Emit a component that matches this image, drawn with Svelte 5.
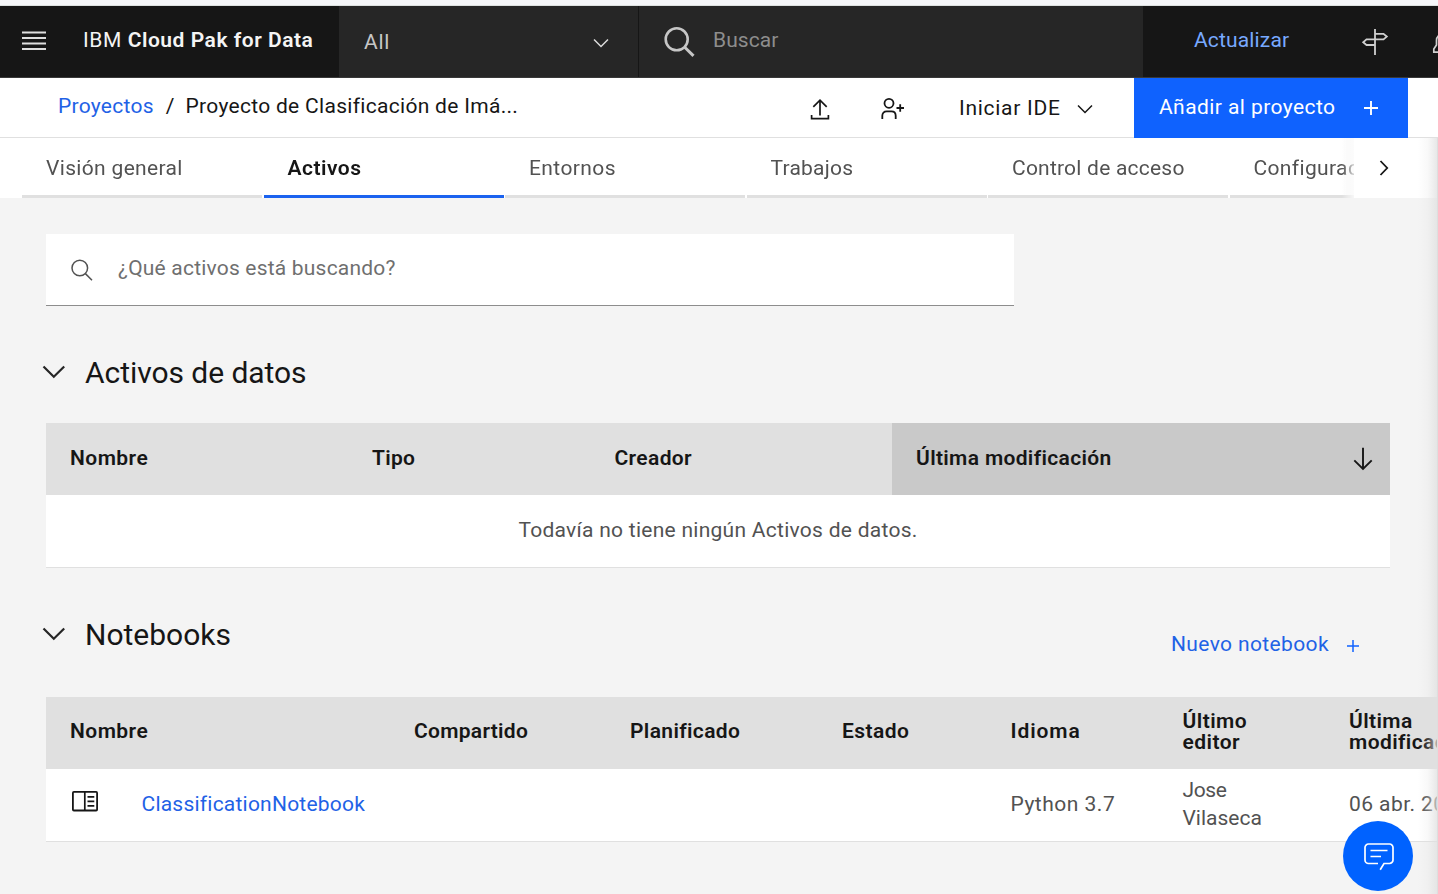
<script>
  const tabs = [
    { label: 'Visión general', ls: 0.33 },
    { label: 'Activos', ls: 0.5, active: true },
    { label: 'Entornos', ls: 0.4 },
    { label: 'Trabajos', ls: 0.22 },
    { label: 'Control de acceso', ls: 0.22 },
    { label: 'Configuración', ls: 0.36 }
  ];
  const dataColumns = [
    { label: 'Nombre', ls: 0.45 },
    { label: 'Tipo', ls: 0.3 },
    { label: 'Creador', ls: 0.37 },
    { label: 'Última modificación', ls: 0.34, sorted: true }
  ];
  const notebookColumns = [
    { label: 'Nombre', ls: 0.45 },
    { label: 'Compartido', ls: 0.29 },
    { label: 'Planificado', ls: 0.36 },
    { label: 'Estado', ls: 0.45 },
    { label: 'Idioma', ls: 0.9 },
    { label: 'Último editor', ls: 0.45 },
    { label: 'Última modificación', ls: 0.4 }
  ];
</script>

<div class="app">
  <div class="strip"></div>
  <header class="shell">
    <svg class="menu" width="24" height="20" viewBox="0 0 24 20"><path d="M0 1.500h24M0 7h24M0 12.500h24M0 18h24" stroke="#dedede" stroke-width="1.8" /></svg>
    <div class="brand"><span class="ibm">IBM</span> <b>Cloud Pak for Data</b></div>
    <div class="scope">
      <span>All</span>
      <svg width="24" height="24" viewBox="0 0 16 16"><path d="M8 11L3 6l.7-.7L8 9.6l4.3-4.3.7.7z" fill="#dcdcdc" /></svg>
    </div>
    <div class="global-search">
      <svg width="32" height="32" viewBox="0 0 32 32"><circle cx="12.700" cy="13.3" r="11" fill="none" stroke="#c6c6c6" stroke-width="2.6" /><path d="M20.700 21.3l8.800 8.600" stroke="#c6c6c6" stroke-width="3" /></svg>
      <span>Buscar</span>
    </div>
    <a class="upgrade" href="#upgrade">Actualizar</a>
    <svg class="post" width="28" height="28" viewBox="0 0 28 28" fill="none" stroke="#d0d0d0" stroke-width="1.8"><path d="M14 1v26M14 5.800h8.500l3.300 2.800-3.300 2.800H5.500L2.200 14.200l3.300 2.800H14" /></svg>
    <svg class="bell" width="24" height="24" viewBox="0 0 24 24" fill="none" stroke="#d0d0d0" stroke-width="1.700"><path d="M12 2.500c-4.500 0-7.500 3-7.500 7V14l-2.700 4v3.200h20.400V18l-2.700-4V9.500c0-4-3-7-7.500-7z" /></svg>
  </header>

  <div class="toolbar">
    <nav class="crumbs"><a href="#projects">Proyectos</a><i>/</i><span>Proyecto de Clasificación de Imá...</span></nav>
    <svg class="upload" width="24" height="24" viewBox="0 0 24 24" fill="none" stroke="#161616" stroke-width="1.7"><path d="M12 3.200V18.500M5.300 9.800L12 3.200l6.700 6.600M3.600 18v3.600h16.800V18" /></svg>
    <svg class="person" width="24" height="24" viewBox="0 0 24 24" fill="none" stroke="#161616" stroke-width="1.8"><circle cx="9" cy="6.300" r="4.500" /><path d="M2.300 22v-3.300c0-2.600 1.700-4.300 4.300-4.300h4.800c2.600 0 4.300 1.700 4.300 4.300V22M16.500 11h7.500M20.200 7.200v7.600" /></svg>
    <div class="ide"><span>Iniciar IDE</span><svg width="24" height="24" viewBox="0 0 16 16"><path d="M8 11L3 6l.7-.7L8 9.600l4.300-4.300.7.7z" fill="#161616" /></svg></div>
    <button class="add"><span>Añadir al proyecto</span><svg width="14" height="14" viewBox="0 0 14 14"><path d="M7 0v14M0 7h14" stroke="#fff" stroke-width="1.900" /></svg></button>
  </div>

  <div class="tabbar">
    <div class="tabs">
      {#each tabs as tab}
        <div class="tab" class:active={tab.active} style:letter-spacing="{tab.ls}px">{tab.label}</div>
      {/each}
    </div>
    <div class="next"><svg width="10" height="16" viewBox="0 0 10 16"><path d="M1.500 1l6.700 7-6.700 7" fill="none" stroke="#161616" stroke-width="1.800" /></svg></div>
  </div>

  <main>
    <div class="asset-search">
      <svg width="24" height="24" viewBox="0 0 24 24" fill="none" stroke="#525252" stroke-width="1.500"><circle cx="9.800" cy="10" r="7.800" /><path d="M15.400 15.600l6.600 6.600" /></svg>
      <span>¿Qué activos está buscando?</span>
    </div>

    <section class="data">
      <h2><svg width="24" height="14" viewBox="0 0 24 14"><path d="M1.500 1.500L11.800 11.800 22.200 1.500" fill="none" stroke="#262626" stroke-width="2.200" /></svg><span>Activos de datos</span></h2>
      <div class="head data-grid">
        {#each dataColumns as col}
          <div class="cell" class:sorted={col.sorted} style:letter-spacing="{col.ls}px">
            <span>{col.label}</span>
            {#if col.sorted}
              <svg width="20" height="24" viewBox="0 0 20 24"><path d="M10 .800v21M1.300 13.300L10 22l8.700-8.700" fill="none" stroke="#161616" stroke-width="1.900" /></svg>
            {/if}
          </div>
        {/each}
      </div>
      <div class="empty">Todavía no tiene ningún Activos de datos.</div>
    </section>

    <section class="notebooks">
      <div class="title-row">
        <h2><svg width="24" height="14" viewBox="0 0 24 14"><path d="M1.500 1.500L11.800 11.800 22.200 1.500" fill="none" stroke="#262626" stroke-width="2.200" /></svg><span>Notebooks</span></h2>
        <a class="new" href="#new"><span>Nuevo notebook</span><svg width="12" height="12" viewBox="0 0 12 12"><path d="M6 0v12M0 6h12" stroke="#0f62fe" stroke-width="1.500" /></svg></a>
      </div>
      <div class="head nb-grid">
        {#each notebookColumns as col}
          <div class="cell" style:letter-spacing="{col.ls}px">{col.label}</div>
        {/each}
      </div>
      <div class="row nb-grid">
        <div class="cell file">
          <svg width="26" height="21" viewBox="0 0 26 21" fill="none" stroke="#161616"><rect x=".9" y=".9" width="24.200" height="18.600" rx="1" stroke-width="1.800" /><path d="M12.800 1v18.500M15.500 5.800h6.800M15.500 10.300h6.800M15.500 14.800h6.800" stroke-width="1.700" /></svg>
          <a href="#notebook">ClassificationNotebook</a>
        </div>
        <div class="cell"></div>
        <div class="cell"></div>
        <div class="cell"></div>
        <div class="cell lang">Python 3.7</div>
        <div class="cell"><span class="jose">Jose</span> Vilaseca</div>
        <div class="cell date">06 abr. 2021</div>
      </div>
    </section>
  </main>

  <div class="edge"></div>
  <button class="chat" aria-label="Chat">
    <svg width="30" height="28" viewBox="0 0 30 28" fill="none" stroke="#fff" stroke-width="1.700"><path d="M14 20.500H4.500A3.500 3.500 0 0 1 1 17V4.500A3.500 3.500 0 0 1 4.500 1h21A3.500 3.500 0 0 1 29 4.500V17a3.500 3.500 0 0 1-3.500 3.500H20l-3.800 6.200M6.500 7.500h17M6.500 13.500h10.500" /></svg>
  </button>
</div>

<style>
  :global(body) { background: #f4f4f4; overflow: hidden; }
  .app {
    position: relative;
    box-sizing: border-box;
    width: 1438px;
    height: 894px;
    overflow: hidden;
    font: 400 21px/28px Roboto, sans-serif;
    color: #161616;
    background: #f4f4f4;
  }
  svg { display: block; flex: none; }
  a { text-decoration: none; color: #1f62e6; }
  b { font-weight: 600; }
  h2 { margin: 0; font: 400 30px/40px Roboto, sans-serif; display: flex; align-items: center; }
  span { white-space: nowrap; }
  button { border: 0; padding: 0; font: inherit; color: inherit; }

  .strip { height: 5px; background: #f5f6f9; border-bottom: 1px solid #dde1e0; }
  .shell { display: flex; height: 71px; background: #161616; border-bottom: 1px solid #393939; }
  .shell > *, .toolbar > * { flex: none; }
  .menu { margin: 25px 0 0 22px; }
  .brand { width: 256px; margin-left: 37px; padding-top: 20px; color: #f4f4f4; white-space: nowrap; letter-spacing: .53px; }
  .ibm { letter-spacing: .6px; }
  .scope { box-sizing: border-box; width: 300px; display: flex; justify-content: space-between; padding: 22px 25px 0; background: #262626; border-right: 1px solid #161616; color: #c6c6c6; letter-spacing: .7px; }
  .scope svg { margin-top: 3px; }
  .global-search { width: 504px; display: flex; background: #262626; color: #8d8d8d; letter-spacing: .05px; }
  .global-search svg { margin: 20px 0 0 25px; }
  .global-search span { margin: 20px 0 0 17px; }
  .upgrade { width: 167px; margin: 20px 0 0 51px; color: #78a9ff; letter-spacing: .15px; }
  .post { margin: 22px 0 0; }
  .bell { margin: 25px 0 0 43px; }

  .toolbar { display: flex; height: 59px; background: #fff; border-bottom: 1px solid #e0e0e0; }
  .crumbs { width: 749px; display: flex; margin-left: 58px; padding-top: 14px; }
  .crumbs a { letter-spacing: .27px; }
  .crumbs i { font-style: normal; margin: 0 11px 0 12px; }
  .crumbs span { letter-spacing: .3px; }
  .upload { margin: 19px 0 0 1px; }
  .person { margin: 19px 0 0 48px; }
  .ide { width: 230px; box-sizing: border-box; display: flex; padding: 16px 0 0 55px; letter-spacing: .72px; }
  .ide svg { margin: 3px 0 0 12px; }
  .add { box-sizing: border-box; width: 274px; height: 60px; display: flex; padding: 15px 0 0 25px; background: #0f62fe; color: #fff; letter-spacing: .42px; }
  .add svg { margin: 8px 0 0 29px; }

  .tabbar { display: flex; height: 60px; background: #fff; }
  .tabs { width: 1332px; margin-left: 22px; overflow: hidden; display: flex; gap: 1.5px; flex: none; -webkit-mask-image: linear-gradient(to left, rgba(0,0,0,.25), #000 12px); mask-image: linear-gradient(to left, rgba(0,0,0,.25), #000 12px); background: linear-gradient(to left, #f2f2f2, #fff 12px); }
  .tab { box-sizing: border-box; width: 240px; flex: none; padding: 16px 0 0 24px; border-bottom: 3px solid #e0e0e0; color: #525252; white-space: nowrap; }
  .tab.active { color: #161616; font-weight: 600; border-color: #1b62ef; }
  .next { padding: 22px 0 0 25px; }

  main { padding: 36px 0 0 46px; }
  .asset-search { box-sizing: border-box; width: 968px; height: 72px; display: flex; background: #fff; border-bottom: 1px solid #8d8d8d; color: #6f6f6f; padding: 20px 0 0 24px; letter-spacing: .2px; }
  .asset-search svg { margin-top: 4px; }
  .asset-search span { margin-left: 24px; }
  .data { margin-top: 47px; }
  h2 { margin-left: -4px; }
  h2 span { margin-left: 19px; }
  h2 svg { margin-top: -2px; }
  .data h2 span { letter-spacing: -.05px; }
  .head { height: 72px; background: #e0e0e0; font-weight: 600; }
  .data .head { width: 1344px; margin-top: 30px; }
  .data-grid { display: grid; grid-template-columns: 302px 242.500px 301.500px 498px; }
  .data-grid .cell { display: flex; justify-content: space-between; padding: 21px 17px 0 24px; }
  .data-grid .cell svg { margin-top: 3px; }
  .sorted { background: #c9c9c9; }
  .empty { width: 1344px; height: 72px; line-height: 70px; text-align: center; background: #fff; border-bottom: 1px solid #e0e0e0; color: #525252; letter-spacing: .27px; }

  .notebooks { margin-top: 47px; }
  .title-row { display: flex; justify-content: space-between; width: 1313px; height: 43px; }
  .title-row h2 { height: 40px; }
  .title-row h2 span { letter-spacing: 0; }
  .new { display: flex; padding-top: 15px; letter-spacing: .38px; }
  .new svg { margin: 10px 0 0 18px; }
  .nb-grid { display: grid; width: 1520px; grid-template-columns: 344px 216px 212px 168.500px 172px 166.500px 241px; align-items: center; }
  .nb-grid .cell { padding: 0 24px; }
  .notebooks .head { margin-top: 39px; line-height: 21px; }
  .notebooks .head .cell { padding-top: 0; margin-top: -3px; }
  .row { height: 72px; background: #fff; border-bottom: 1px solid #e0e0e0; color: #525252; }
  .row .cell { margin-top: -2px; }
  .file { display: flex; }
  .file svg { margin: 1px 0 0 2px; }
  .file a { margin-left: 43.500px; letter-spacing: .22px; }
  .lang { letter-spacing: .5px; }
  .jose { letter-spacing: -.4px; }
  .date { white-space: nowrap; letter-spacing: .42px; }

  .edge { position: absolute; box-sizing: border-box; right: 0; top: 138px; bottom: 0; width: 20px; background: linear-gradient(to right, rgba(224,224,224,0), rgba(224,224,224,.2) 50%, rgba(224,224,224,.75)); border-right: 1px solid #dedede; }
  .chat { position: absolute; left: 1343px; top: 821px; width: 70px; height: 70px; border-radius: 50%; background: #0062ff; padding: 1px 0 0 21px; }
</style>
